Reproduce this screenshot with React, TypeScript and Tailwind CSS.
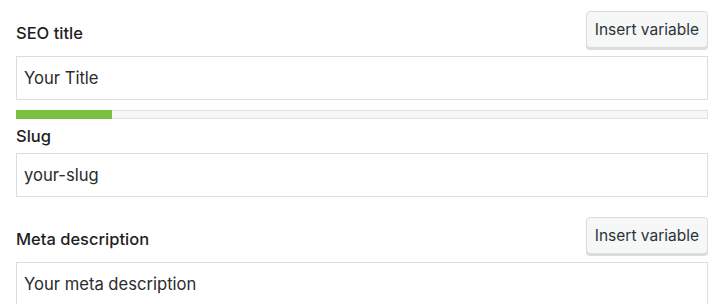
const font = "font-['Inter','Noto_Sans',sans-serif]";

function LabelRow({ label, button }: { label: string; button?: boolean }) {
  return (
    <div className="flex items-end justify-between">
      <span className="pb-[3px] text-[16.5px] leading-[24px] font-medium text-[#1e1e1e]">{label}</span>
      {button && (
        <button className="h-[37px] rounded-[4px] border border-[#dcdcde] bg-[#f6f7f7] px-[8px] text-[15.5px] text-[#2c3338] shadow-[0_2px_0_#dcdcde]">
          Insert variable
        </button>
      )}
    </div>
  );
}

function Field({ value }: { value: string }) {
  return (
    <div className="flex h-[44px] items-center border border-[#dddddd] bg-white px-[7px] text-[16.6px] text-[#2c2c2c]">
      {value}
    </div>
  );
}

export default function App() {
  return (
    <div className={`${font} h-[304px] overflow-hidden bg-white px-4 pr-[12px] pt-[11px]`}>
      <LabelRow label="SEO title" button />
      <div className="mt-[8px]">
        <Field value="Your Title" />
      </div>
      <div className="mt-[10px] h-[9px] border border-[#e2e2e2] bg-[#f7f7f7]">
        <div className="-m-px h-[9px] w-[96px] bg-[#7ac142]" />
      </div>
      <div className="mt-[5px]">
        <LabelRow label="Slug" />
      </div>
      <div className="mt-[2px]">
        <Field value="your-slug" />
      </div>
      <div className="mt-[20px]">
        <LabelRow label="Meta description" button />
      </div>
      <div className="mt-[8px]">
        <Field value="Your meta description" />
      </div>
    </div>
  );
}
